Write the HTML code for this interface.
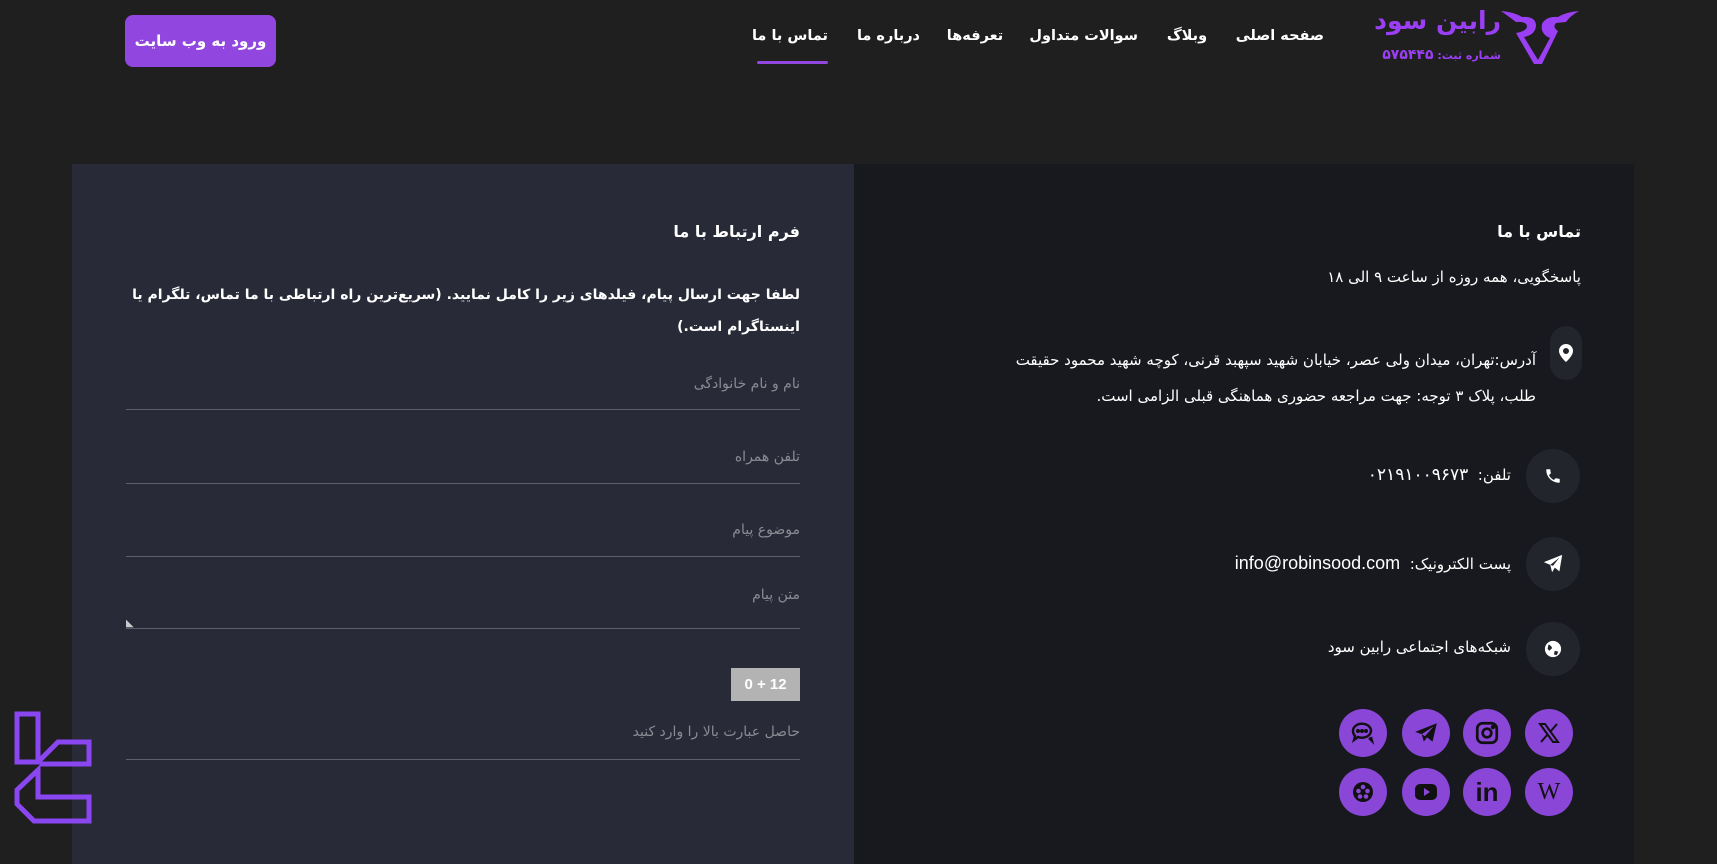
<!DOCTYPE html>
<html><head><meta charset="utf-8"><style>
*{margin:0;padding:0;box-sizing:border-box}
body{width:1717px;height:835px;overflow:hidden;background:#1f1f1f;font-family:"DejaVu Sans","Liberation Sans",sans-serif;color:#fff;position:relative;direction:rtl}
.a{position:absolute;white-space:nowrap}
.btn{left:125px;top:15px;width:151px;height:52px;background:#9146e0;border-radius:8px;font-size:15px;font-weight:bold;display:flex;align-items:center;justify-content:center}
.nav{top:28px;font-size:14.5px;font-weight:bold}
.lp{left:72px;top:164px;width:782px;height:700px;background:#282a37}
.rp{left:854px;top:164px;width:780px;height:700px;background:#17191e}
.ph{font-size:14px;color:#8a8b93;right:917px}
.ln{left:126px;width:674px;height:1px;background:#5d5f6a}
.ci{width:54px;height:54px;border-radius:50%;background:#23252d;display:flex;align-items:center;justify-content:center}
.s{width:48px;height:48px;border-radius:50%;background:#8a46d6;display:flex;align-items:center;justify-content:center}
.tx{font-size:15px}
</style></head><body>
<div class="a btn">ورود به وب سایت</div>
<div class="a nav" style="left:757px;width:71px;text-align:center">تماس با ما</div>
<div class="a" style="left:757px;top:61px;width:71px;height:3px;background:#9146e0;border-radius:2px"></div>
<div class="a nav" style="left:858px;width:62px;text-align:center">درباره ما</div>
<div class="a nav" style="left:944px;width:62px;text-align:center">تعرفه‌ها</div>
<div class="a nav" style="left:1030px;width:108px;text-align:center">سوالات متداول</div>
<div class="a nav" style="left:1158px;width:58px;text-align:center">وبلاگ</div>
<div class="a nav" style="left:1238px;width:86px;text-align:center">صفحه اصلی</div>
<!-- logo -->
<svg class="a" style="left:1500px;top:8px" width="80" height="58" viewBox="0 0 80 58"><path d="M1 3 Q14 4 22 9 Q36 8 36 18 Q35 27 24 29 L38 52 L50 30 Q40 26 42 16 Q46 8 58 9 Q66 4 79 3 Q70 8 66 14 L56 15 Q52 19 58 23 L42 56 L34 56 L16 25 Q27 23 27 18 Q26 13 16 14 Q8 8 1 3Z" fill="#9b3ff5"/></svg>
<div class="a" style="right:216px;top:6px;font-size:25px;font-weight:bold;color:#9b3ff5">رابین سود</div>
<div class="a" style="right:216px;top:47px;font-size:11px;font-weight:bold;color:#9b3ff5">شماره ثبت: <span style="font-size:14px">۵۷۵۴۴۵</span></div>

<div class="a lp"></div>
<div class="a rp"></div>

<!-- form -->
<div class="a" style="right:917px;top:222px;font-size:16px;font-weight:bold">فرم ارتباط با ما</div>
<div class="a" style="right:917px;top:279px;width:680px;white-space:normal;font-size:14px;font-weight:bold;line-height:32px">لطفا جهت ارسال پیام، فیلدهای زیر را کامل نمایید. (سریع‌ترین راه ارتباطی با ما تماس، تلگرام یا اینستاگرام است.)</div>
<div class="a ph" style="top:376px">نام و نام خانوادگی</div><div class="a ln" style="top:409px"></div>
<div class="a ph" style="top:449px">تلفن همراه</div><div class="a ln" style="top:483px"></div>
<div class="a ph" style="top:522px">موضوع پیام</div><div class="a ln" style="top:556px"></div>
<div class="a ph" style="top:587px">متن پیام</div><div class="a ln" style="top:628px"></div>
<div class="a" style="left:126px;top:618px;font-size:10px;color:#ccc">◣</div>
<div class="a" dir="ltr" style="direction:ltr;left:731px;top:668px;width:69px;height:33px;background:#b3b3b3;color:#fff;font-family:'Liberation Sans',sans-serif;font-weight:bold;font-size:15px;line-height:33px;text-align:center">0 + 12</div>
<div class="a ph" style="top:724px">حاصل عبارت بالا را وارد کنید</div><div class="a ln" style="top:759px"></div>

<!-- contact -->
<div class="a" style="right:136px;top:222px;font-size:16px;font-weight:bold">تماس با ما</div>
<div class="a tx" style="right:136px;top:268px">پاسخگویی، همه روزه از ساعت ۹ الی ۱۸</div>
<div class="a" style="left:1550px;top:326px;width:32px;height:54px;border-radius:16px;background:#23252d;display:flex;align-items:center;justify-content:center"><svg width="14" height="18" viewBox="0 0 14 18"><path d="M7 0A7 7 0 0 0 0 7c0 5 7 11 7 11s7-6 7-11A7 7 0 0 0 7 0zm0 4a3 3 0 1 1 0 6 3 3 0 0 1 0-6z" fill="#fff"/></svg></div>
<div class="a tx" style="right:181px;top:342px;line-height:36px;text-align:right">آدرس:تهران، میدان ولی عصر، خیابان شهید سپهبد قرنی، کوچه شهید محمود حقیقت<br>طلب، پلاک ۳ توجه: جهت مراجعه حضوری هماهنگی قبلی الزامی است.</div>
<div class="a ci" style="left:1526px;top:449px"><svg width="18" height="18" viewBox="0 0 24 24"><path d="M6.6 10.8a15 15 0 0 0 6.6 6.6l2.2-2.2c.3-.3.7-.4 1-.2 1.1.4 2.3.6 3.6.6.6 0 1 .4 1 1V20c0 .6-.4 1-1 1A17 17 0 0 1 3 4c0-.6.4-1 1-1h3.5c.6 0 1 .4 1 1 0 1.3.2 2.5.6 3.6.1.3 0 .7-.2 1z" fill="#fff"/></svg></div>
<div class="a tx" style="right:206px;top:465px">تلفن:&nbsp; <span style="font-size:17px">۰۲۱۹۱۰۰۹۶۷۳</span></div>
<div class="a ci" style="left:1526px;top:537px"><svg width="22" height="22" viewBox="0 0 24 24"><path d="M22 2 2 10l7 3 2 8 3-5 5 4z M9 13l10-8-7 9" fill="#fff"/></svg></div>
<div class="a tx" style="right:206px;top:553px">پست الکترونیک:&nbsp; <span style="font-family:'Liberation Sans',sans-serif;font-size:18px">info@robinsood.com</span></div>
<div class="a ci" style="left:1526px;top:622px"><svg width="18" height="18" viewBox="0 0 20 20"><circle cx="10" cy="10" r="9" fill="#fff"/><path d="M5 5q3 1 4 4l-3 3-2-2zM12 12l4 1-2 4-3-1z" fill="#23252d"/></svg></div>
<div class="a tx" style="right:206px;top:638px">شبکه‌های اجتماعی رابین سود</div>

<!-- socials -->
<div class="a s" style="left:1339px;top:709px"><svg width="28" height="28" viewBox="0 0 28 28" fill="none" stroke="#111" stroke-width="2.4"><path d="M4 12a9 7 0 1 1 5 6l-4 3 1-4a7 7 0 0 1-2-5z"/><path d="M20 19l3 3-1-4"/><circle cx="9" cy="12" r=".8" fill="#111"/><circle cx="13" cy="12" r=".8" fill="#111"/><circle cx="17" cy="12" r=".8" fill="#111"/></svg></div>
<div class="a s" style="left:1402px;top:709px"><svg width="26" height="26" viewBox="0 0 24 24"><path d="M22 3 2 11l6 2 2 7 3-4 5 4zM8 13l11-7-8 9" fill="#111"/></svg></div>
<div class="a s" style="left:1463px;top:709px"><svg width="26" height="26" viewBox="0 0 24 24" fill="none" stroke="#111" stroke-width="2.5"><rect x="3" y="3" width="18" height="18" rx="5"/><circle cx="12" cy="12" r="4"/><circle cx="17.5" cy="6.5" r=".8" fill="#111"/></svg></div>
<div class="a s" style="left:1525px;top:709px"><svg width="24" height="24" viewBox="0 0 24 24" fill="none" stroke="#111" stroke-width="2"><path d="M3 3h5l13 18h-5z M20 3l-7 8 M4 21l7-8"/></svg></div>
<div class="a s" style="left:1339px;top:768px"><svg width="28" height="28" viewBox="0 0 28 28"><circle cx="14" cy="14" r="10" fill="#111"/><circle cx="14" cy="9" r="2.3" fill="#8a46d6"/><circle cx="9.5" cy="13" r="2.3" fill="#8a46d6"/><circle cx="18.5" cy="13" r="2.3" fill="#8a46d6"/><circle cx="11" cy="18.5" r="2.3" fill="#8a46d6"/><circle cx="17" cy="18.5" r="2.3" fill="#8a46d6"/></svg></div>
<div class="a s" style="left:1402px;top:768px"><svg width="28" height="28" viewBox="0 0 28 28"><rect x="3" y="6" width="22" height="16" rx="5" fill="#111"/><path d="M12 10l6 4-6 4z" fill="#8a46d6"/></svg></div>
<div class="a s" style="left:1463px;top:768px;font-family:'Liberation Sans',sans-serif;font-weight:bold;font-size:26px;color:#111;direction:ltr">in</div>
<div class="a s" style="left:1525px;top:768px;font-family:'Liberation Serif',serif;font-size:24px;color:#111;direction:ltr">W</div>

<!-- bottom-left logo -->
<svg class="a" style="left:0;top:700px" width="100" height="135" viewBox="0 700 100 135" fill="none" stroke="#8a46f0" stroke-width="5" stroke-linejoin="miter"><path d="M17 714h21v48l-21 0z"/><path d="M38 762L58 742h31v22H40"/><path d="M38 770L17 790v14l17 17h55v-24H38z"/></svg>
</body></html>
